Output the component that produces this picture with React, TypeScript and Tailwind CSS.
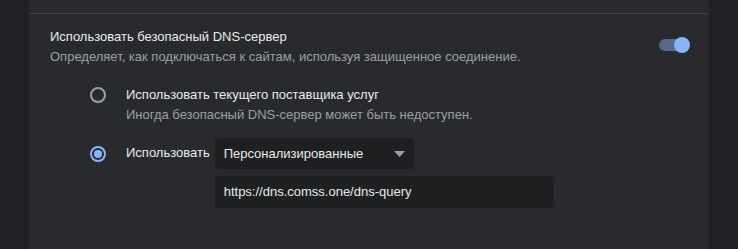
import React from 'react';

const font = { fontFamily: '"Liberation Sans", Arial, sans-serif' };

const Radio = ({ checked }: { checked?: boolean }) =>
    checked ? (
        <div className="flex h-4 w-4 shrink-0 items-center justify-center rounded-full border-2 border-[#8ab4f8]">
            <div className="h-2 w-2 rounded-full bg-[#8ab4f8]" />
        </div>
    ) : (
        <div className="h-4 w-4 shrink-0 rounded-full border-2 border-[#9aa0a6]" />
    );

const App = () => {
    return (
        <div className="flex h-[249px] w-[738px] overflow-hidden bg-[#202124] text-[13px]" style={font}>
            <div className="w-[29px] shrink-0" />
            <div className="w-[680px] shrink-0 bg-[#292a2d]">
                <div className="h-[14px] border-b border-[#3f4043]" />
                <div className="flex items-start pl-[21px] pr-[19px] pt-[13px]">
                    <div className="flex-1">
                        <div className="leading-5 text-[#e8eaed]">Использовать безопасный DNS-сервер</div>
                        <div className="leading-5 text-[#9aa0a6]">
                            Определяет, как подключаться к сайтам, используя защищенное соединение.
                        </div>
                    </div>
                    <div className="relative mt-[10px] flex h-4 w-[31px] items-center">
                        <div className="h-3 w-[26px] rounded-full bg-[#56698a]" />
                        <div className="absolute right-0 top-0 h-4 w-4 rounded-full bg-[#8ab4f8]" />
                    </div>
                </div>

                <div className="mt-[18px] flex items-start pl-[61px]">
                    <div className="mt-[2px]">
                        <Radio />
                    </div>
                    <div className="ml-5">
                        <div className="leading-5 text-[#e8eaed]">Использовать текущего поставщика услуг</div>
                        <div className="leading-5 text-[#9aa0a6]">Иногда безопасный DNS-сервер может быть недоступен.</div>
                    </div>
                </div>

                <div className="mt-[13px] flex items-start pl-[61px]">
                    <div className="mt-[8px]">
                        <Radio checked />
                    </div>
                    <div className="ml-5 flex items-start gap-[5px]">
                        <div className="mt-[5px] leading-5 text-[#e8eaed]">Использовать</div>
                        <div className="flex flex-col gap-[7px]">
                            <div className="flex h-[31px] w-[199px] items-center justify-between rounded bg-[#1f2022] pl-[9px] pr-[9px] text-[#e8eaed]">
                                <span>Персонализированные</span>
                                <svg width="11" height="6" viewBox="0 0 11 6">
                                    <path d="M0 0h11L5.5 6z" fill="#9aa0a6" />
                                </svg>
                            </div>
                            <div className="flex h-8 w-[339px] items-center rounded bg-[#1f2022] pl-[9px] text-[#e8eaed]">
                                https://dns.comss.one/dns-query
                            </div>
                        </div>
                    </div>
                </div>
            </div>
            <div className="flex-1" />
        </div>
    );
};

export default App;
